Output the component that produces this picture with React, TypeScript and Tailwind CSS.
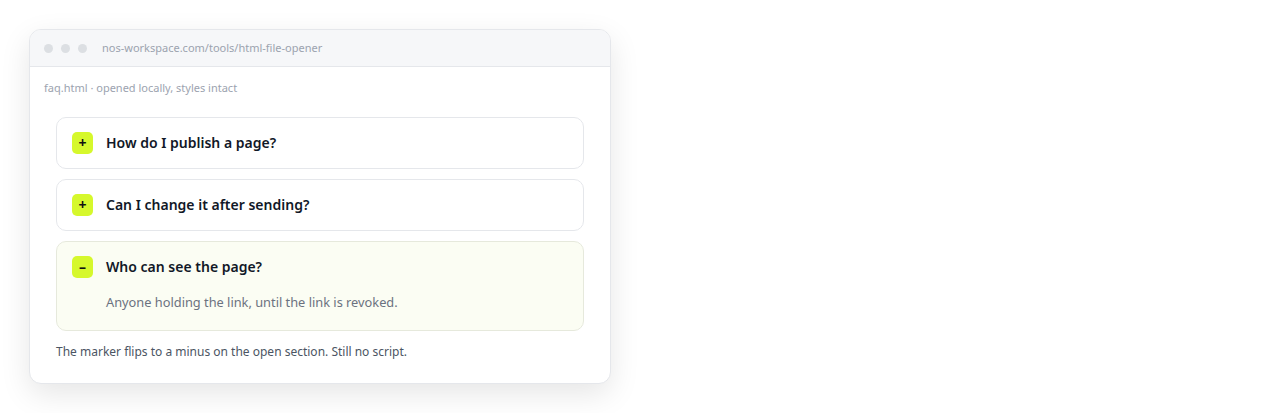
const font = { fontFamily: '"Noto Sans", "Open Sans", Arial, sans-serif' };

type Item = { q: string; a?: string; open?: boolean };

const items: Item[] = [
  { q: 'How do I publish a page?' },
  { q: 'Can I change it after sending?' },
  { q: 'Who can see the page?', a: 'Anyone holding the link, until the link is revoked.', open: true },
];

function Marker({ open }: { open?: boolean }) {
  return (
    <span className="flex h-[22px] w-[21px] shrink-0 items-center justify-center rounded-[5px] bg-[#d6f82c] text-[14px] font-bold leading-none text-[#111]">
      {open ? '–' : '+'}
    </span>
  );
}

function FaqItem({ item }: { item: Item }) {
  return (
    <div
      className={
        item.open
          ? 'rounded-[10px] border border-[#e6e9dc] bg-[#fbfdf3] px-[15px] pt-[14px] pb-[18px]'
          : 'rounded-[10px] border border-[#e5e7eb] bg-white px-[15px] py-[14px]'
      }
    >
      <div className="flex items-center gap-[13px]">
        <Marker open={item.open} />
        <span className="text-[14px] font-semibold text-[#111827]">{item.q}</span>
      </div>
      {item.a && (
        <p className="mt-[14px] pl-[34px] text-[12.8px] leading-5 text-[#6b7280]">{item.a}</p>
      )}
    </div>
  );
}

export default function App() {
  return (
    <div className="min-h-[413px] bg-white p-[29px]" style={font}>
      <div className="w-[582px] overflow-hidden rounded-[12px] border border-[#e5e7eb] bg-white shadow-[0_10px_30px_rgba(0,0,0,0.10)]">
        {/* browser chrome */}
        <div className="flex h-[37px] items-center gap-[8px] border-b border-[#e5e7eb] bg-[#f6f7f9] pl-[14px]">
          <span className="h-[9px] w-[9px] rounded-full bg-[#dcdfe3]" />
          <span className="h-[9px] w-[9px] rounded-full bg-[#dcdfe3]" />
          <span className="h-[9px] w-[9px] rounded-full bg-[#dcdfe3]" />
          <span className="ml-[7px] text-[11px] text-[#9ca3af]">nos-workspace.com/tools/html-file-opener</span>
        </div>

        <div className="px-[14px] pt-[13px] pb-[22px]">
          <p className="text-[11px] text-[#9ca3af]">faq.html · opened locally, styles intact</p>
          <div className="px-[12px] pt-[20px]">
            <div className="flex flex-col gap-[10px]">
              {items.map((it) => (
                <FaqItem key={it.q} item={it} />
              ))}
            </div>
            <p className="mt-[12px] text-[12px] text-[#4b5563]">
              The marker flips to a minus on the open section. Still no script.
            </p>
          </div>
        </div>
      </div>
    </div>
  );
}
